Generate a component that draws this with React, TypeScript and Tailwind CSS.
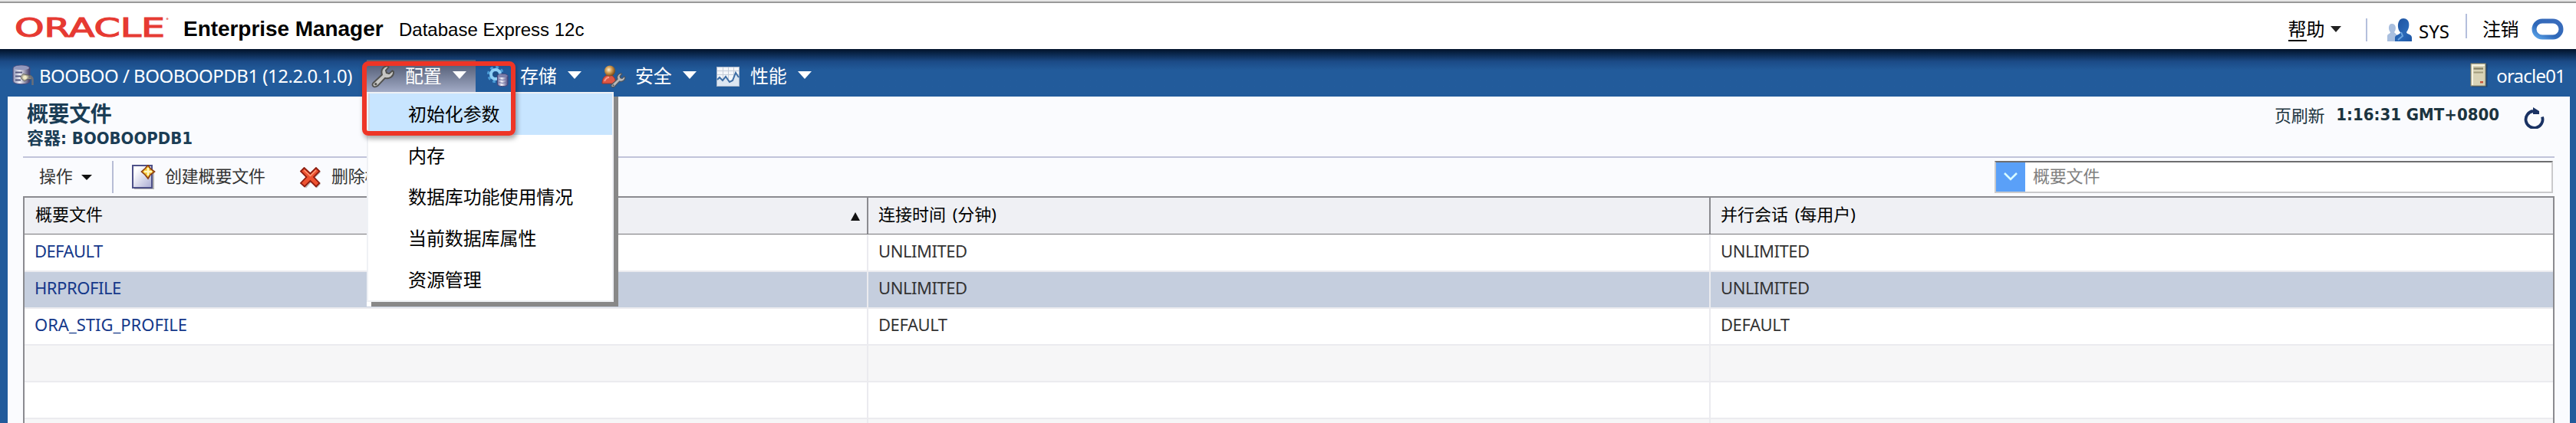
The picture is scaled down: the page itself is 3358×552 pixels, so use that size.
import React from "react";

const OracleLogo = () => (
  <svg className="h-[36px] w-[204px] overflow-visible" viewBox="0 0 204 36">
    <text x="-1" y="29.500" fontFamily="DejaVu Sans, sans-serif" fontSize="34" fill="#e63a32" stroke="#e63a32" strokeWidth="1.200" textLength="196" lengthAdjust="spacingAndGlyphs">
      ORACLE
    </text>
    <circle cx="198" cy="6.500" r="1.500" fill="#ee8a84" />
  </svg>
);

const Triangle = ({ className }: { className: string }) => (
  <svg className={className} viewBox="0 0 18 10" preserveAspectRatio="none">
    <path d="M0 0H18L9 10Z" fill="currentColor" />
  </svg>
);

const DatabaseIcon = () => (
  <svg className="h-7 w-7" viewBox="0 0 28 28">
    <defs>
      <linearGradient id="db" x1="0" x2="1">
        <stop offset="0" stopColor="#8d93b5" />
        <stop offset=".4" stopColor="#f4f4fa" />
        <stop offset="1" stopColor="#3d3a66" />
      </linearGradient>
    </defs>
    <path d="M1 5C1 0 23 0 23 5V22C23 27 1 27 1 22Z" fill="url(#db)" stroke="#4a4a7c" />
    <ellipse cx="12" cy="4.500" rx="10" ry="3" fill="#9298bd" />
    <path d="M4 10.500H13M4 15.500H11M4 20.500H11" stroke="#55587e" strokeWidth="2" />
    <path d="M11 16L14 12.500L20 14L25 15V19H20L16 22L12 19Z" fill="#b9b5a0" stroke="#66655c" />
    <circle cx="16.500" cy="17" r="2.500" fill="#f3edc8" />
    <path d="M21 16.500H24Q26.500 16.500 26.500 20V27" stroke="#6b6f7a" strokeWidth="2.500" fill="none" />
  </svg>
);

const Wrench = ({ light = "#c6c6c4", dark = "#51514f" }: { light?: string; dark?: string }) => (
  <g strokeLinejoin="round">
    <path
      d="M2 24L14 13C12 7 15 2 21 1L23 2.500L19 7L20 10.500L23.500 11.500L28 7.500L29.500 9C30 15 24 19 18 17.500L8 28C4 31 -1 28 2 24Z"
      fill={light}
      stroke={dark}
      strokeWidth="2"
    />
    <circle cx="5.500" cy="25.500" r="1.700" fill={dark} />
  </g>
);

const WrenchIcon = () => (
  <svg className="h-[30px] w-[31px]" viewBox="0 0 31 31">
    <Wrench />
  </svg>
);

const StorageIcon = () => (
  <svg className="h-[28px] w-[30px]" viewBox="0 0 30 28">
    <defs>
      <linearGradient id="cyl" x1="0" x2="1">
        <stop offset="0" stopColor="#6a6a9c" />
        <stop offset=".4" stopColor="#f2f2fb" />
        <stop offset="1" stopColor="#4b4a80" />
      </linearGradient>
    </defs>
    <circle cx="12" cy="11" r="9" fill="none" stroke="#4a9bd6" strokeWidth="4" strokeDasharray="3.500 3.570" />
    <circle cx="12" cy="11" r="6" fill="none" stroke="#8fd0f5" strokeWidth="4" />
    <circle cx="12" cy="11" r="3.500" fill="#1d4f86" />
    <path d="M14.500 13C14.500 9.500 28 9.500 28 13V24C28 27.500 14.500 27.500 14.500 24Z" fill="url(#cyl)" stroke="#45457a" />
    <ellipse cx="21.250" cy="13" rx="6.500" ry="2" fill="#7c7fab" />
    <path d="M16 17.500Q21 19.500 26.500 17.500M16 21.500Q21 23.500 26.500 21.500" stroke="#7173a3" fill="none" />
  </svg>
);

const SecurityIcon = () => (
  <svg className="h-[31px] w-[32px]" viewBox="0 0 32 31">
    <defs>
      <radialGradient id="head" cx=".4" cy=".4" r=".6">
        <stop offset="0" stopColor="#fff0cc" />
        <stop offset=".5" stopColor="#cf9a50" />
        <stop offset="1" stopColor="#7a4c1a" />
      </radialGradient>
    </defs>
    <path d="M1 24C1 17 4 13 10 13C15 13 18 16 19 24Z" fill="#dd5645" stroke="#a03427" />
    <path d="M4 21Q6 16 10 16" stroke="#f59c8e" strokeWidth="2" fill="none" />
    <circle cx="11" cy="7.500" r="7" fill="url(#head)" />
    <g transform="translate(12 10) scale(.64)">
      <Wrench light="#b9b9b9" dark="#4c5460" />
    </g>
  </svg>
);

const PerformanceIcon = () => (
  <svg className="h-[26px] w-[30px]" viewBox="0 0 30 26">
    <rect x=".500" y=".500" width="29" height="25" fill="#f3f6fa" stroke="#a9b6c9" />
    <path d="M1 5.500H29M1 10.500H29M8.500 1V16M15.500 1V16M22.500 1V16" stroke="#c5ccd8" />
    <path d="M1 17L4 14L8 18L12 13L17 20L21 18L25 8L29 14V25H1Z" fill="#dbe6f2" />
    <path d="M1 17L4 14L8 18L12 13L17 20L21 18L25 8L29 14" stroke="#3f6ea5" strokeWidth="2" fill="none" />
  </svg>
);

const UsersIcon = () => (
  <svg className="h-[30px] w-8" viewBox="0 0 32 30">
    <defs>
      <linearGradient id="usr" x1="0" x2="1" y1="0" y2="1">
        <stop offset="0" stopColor="#1c4f9c" />
        <stop offset=".6" stopColor="#2a69b8" />
        <stop offset="1" stopColor="#1d56a4" />
      </linearGradient>
    </defs>
    <path d="M0 30V23C0 20 4 20 4 18C1 15 1 7 6 7C12 7 12 15 9 18L12 21V30Z" fill="#a9bfdf" />
    <path d="M10 30V25C10 21 18 21 17 18C12 13 13 0 21 0C30 0 30 12 25 18C25 21 32 20 32 25V30Z" fill="url(#usr)" />
    <path d="M18 18L20 23L14 28" stroke="#6aa5e0" strokeWidth="2" fill="none" />
  </svg>
);

const ServerIcon = () => (
  <svg className="h-[32px] w-[24px]" viewBox="0 0 24 32">
    <rect x="2.500" y="1.500" width="20" height="30" fill="#1b2c45" opacity=".5" />
    <rect x="1" y="1" width="19" height="29" fill="#d8d3b6" stroke="#8d8768" />
    <path d="M2 2H19V4H4V29H2Z" fill="#f6f3e2" />
    <path d="M4.500 7.500H17" stroke="#8b866a" strokeWidth="2.500" />
    <path d="M4.500 12.500H17" stroke="#a29c7c" strokeWidth="2" />
    <rect x="13" y="24" width="4" height="2.500" fill="#c8553a" />
  </svg>
);

const NewIcon = () => (
  <svg className="h-8 w-8" viewBox="0 0 32 32">
    <defs>
      <linearGradient id="page" x1="0" x2="1" y1="0" y2="1">
        <stop offset=".2" stopColor="#ffffff" />
        <stop offset="1" stopColor="#a9abd2" />
      </linearGradient>
    </defs>
    <path d="M3 31.500H28V8" stroke="#b5b5b5" strokeWidth="2" fill="none" />
    <rect x="1" y="1" width="25" height="29" fill="url(#page)" stroke="#4e5189" strokeWidth="2" />
    <path d="M21 .500L24 5L29.500 9L24 13L21 18L17 13L12.500 9L17 5Z" fill="#f6c431" stroke="#8a3c12" strokeWidth="1.600" />
    <path d="M21 4V14M16 9H26" stroke="#fff7c0" strokeWidth="2.500" />
  </svg>
);

const DeleteIcon = () => (
  <svg className="h-7 w-7" viewBox="0 0 28 28">
    <path d="M7 3L14.500 10L22 3L27 7L19 14.500L27 22L22 27.500L14.500 20L8 27.500L3 22L10 14.500L3 7Z" fill="#bdbdbd" />
    <path d="M5.500 1L13.500 8.500L21 1L25.500 5.500L18 13L25.500 21L21 25.500L13.500 18L6 25.500L1 21L8.500 13L1 5.500Z" fill="#ee5230" stroke="#8e1d10" strokeWidth="1.800" />
    <path d="M5.500 4L13.500 11.500L21 4" stroke="#ff9c76" strokeWidth="1.500" fill="none" />
  </svg>
);

const RefreshIcon = () => (
  <svg className="h-7 w-7" viewBox="0 0 28 28">
    <path d="M24 12.500A11 11 0 1 1 12 5" stroke="#1a3263" strokeWidth="3.800" fill="none" />
    <path d="M12 0L20 5L20 9H12Z" fill="#1a3263" />
  </svg>
);

const navItems = [
  { label: "配置", icon: <WrenchIcon />, active: true },
  { label: "存储", icon: <StorageIcon />, active: false },
  { label: "安全", icon: <SecurityIcon />, active: false },
  { label: "性能", icon: <PerformanceIcon />, active: false },
];

const menuItems = ["初始化参数", "内存", "数据库功能使用情况", "当前数据库属性", "资源管理"];

const rows = [
  { cells: ["DEFAULT", "UNLIMITED", "UNLIMITED"], bg: "bg-white", tracking: "tracking-[-0.6px]" },
  { cells: ["HRPROFILE", "UNLIMITED", "UNLIMITED"], bg: "bg-[#c5cede]", tracking: "tracking-[-0.45px]" },
  { cells: ["ORA_STIG_PROFILE", "DEFAULT", "DEFAULT"], bg: "bg-white", tracking: "tracking-[0px]" },
  { cells: ["", "", ""], bg: "bg-[#f6f6f7]", tracking: "" },
  { cells: ["", "", ""], bg: "bg-white", tracking: "" },
  { cells: ["", "", ""], bg: "bg-[#f6f6f7]", tracking: "" },
];

const ConfigMenu = () => (
  <div className="absolute left-0 top-[42px] z-10 h-[280px] w-[328px] text-black">
    <div className="absolute bottom-0 left-0 h-[6px] w-[6px] bg-white" />
    <div className="absolute bottom-0 right-0 h-[274px] w-[322px] bg-[#888888]" />
    <ul className="relative h-[274px] w-[322px] border-2 border-[#eff1f5] bg-white">
      {menuItems.map((item, i) => (
        <li
          key={item}
          className={`flex h-[54px] items-center text-[24px] leading-[30px] tracking-[-0.1px] ${
            i === 0 ? "border-l-2 border-[#d3dae2] bg-[#c8e5ff] pl-[50px]" : "pl-[52px]"
          }`}
        >
          {item}
        </li>
      ))}
    </ul>
    <div className="absolute left-[-6px] top-[-40px] h-[97px] w-[200px] rounded-[8px] border-[6px] border-[#ee3526] shadow-[2px_4px_6px_rgba(0,0,0,0.35)]" />
  </div>
);

export default function App() {
  return (
    <div className="flex h-[552px] w-[3358px] flex-col overflow-hidden bg-[#225b9b] font-['Noto_Sans','Noto_Sans_CJK_SC',sans-serif] whitespace-nowrap">
      <div className="h-1 shrink-0 border-b-2 border-[#999999] bg-[#e6e6e6]" />

      <header className="flex h-[60px] shrink-0 bg-white text-black">
        <div className="ml-[20px] mt-[14px]">
          <OracleLogo />
        </div>
        <h1 className="ml-[15px] mt-[18px] w-[281px] font-['Liberation_Sans',sans-serif] text-[28px] leading-[32px] font-bold tracking-[-0.05px]">
          Enterprise Manager
        </h1>
        <span className="mt-[21px] font-['Liberation_Sans',sans-serif] text-[24px] leading-[28px]">
          Database Express 12c
        </span>
        <div className="ml-auto flex">
          <div className="mt-[18px] flex text-[24px] leading-[32px] tracking-[-0.5px]">
            <span className="h-[32px] w-[24px] border-b-2 border-black">帮</span>
            <span>助</span>
          </div>
          <Triangle className="ml-[8px] mt-[30px] h-[8px] w-[14px] text-[#222]" />
          <div className="ml-[32px] mt-[20px] h-[30px] w-[2px] bg-[#b4bfdc]" />
          <div className="ml-[26px] mt-[20px]">
            <UsersIcon />
          </div>
          <span className="ml-[9px] mt-[22px] w-[61px] text-[24px] leading-[30px]">SYS</span>
          <div className="mt-[14px] h-[32px] w-[2px] bg-[#b4bfdc]" />
          <span className="ml-[20px] mt-[19px] text-[24px] leading-[30px] tracking-[-0.5px]">注销</span>
          <svg className="ml-[17px] mr-[16px] mt-[20px] h-[28px] w-[42px]" viewBox="0 0 42 28">
            <defs>
              <linearGradient id="ring" x1="0" x2="1" y1="1" y2="0">
                <stop offset="0" stopColor="#5aa4ea" />
                <stop offset=".4" stopColor="#2f68b8" />
                <stop offset="1" stopColor="#3a6cbc" />
              </linearGradient>
            </defs>
            <rect x="3.500" y="3.500" width="35" height="21" rx="10.500" fill="none" stroke="url(#ring)" strokeWidth="6" />
          </svg>
        </div>
      </header>

      <nav className="flex h-[62px] shrink-0 bg-linear-to-b from-[#03132b] via-[#1b4a86] via-[26%] to-[#225b9b] to-[45%] text-[24px] leading-[32px] text-white">
        <div className="ml-[16px] mt-[20px]">
          <DatabaseIcon />
        </div>
        <span className="ml-[7px] mt-[19px] w-[427px] tracking-[-0.5px]">BOOBOO / BOOBOOPDB1 (12.2.0.1.0)</span>
        {navItems.map((item) => (
          <div key={item.label} className="relative mt-[14px] h-[42px] w-[150px]">
            <div
              className={`flex h-[42px] w-[142px] items-center pl-[6px] ${
                item.active ? "border-t-2 border-[#596172] bg-linear-to-b from-[#4e5870] to-[#a2abc6]" : "pt-[2px]"
              }`}
            >
              <div className="w-[44px]">{item.icon}</div>
              <span className="-mt-[3px] w-[62px] tracking-[-0.2px]">{item.label}</span>
              <Triangle className="-mt-[4px] h-[10px] w-[18px] text-white" />
            </div>
            {item.active && <ConfigMenu />}
          </div>
        ))}
        <div className="ml-auto mt-[18px]">
          <ServerIcon />
        </div>
        <span className="ml-[10px] mr-[14px] mt-[19px] tracking-[-0.8px]">oracle01</span>
      </nav>

      <main className="ml-[10px] mr-[8px] flex grow flex-col bg-[#fafbfe] pl-[20px] pr-[20px]">
        <div className="flex h-[80px] shrink-0 border-b-2 border-[#c1c4da] text-[#1b3d55]">
          <div className="ml-[5px] mt-[4px] font-bold">
            <h2 className="text-[28px] leading-[36px] tracking-[-0.4px]">概要文件</h2>
            <div className="font-['DejaVu_Sans_Condensed','Noto_Sans_CJK_SC',sans-serif] text-[22px] leading-[30px]">容器: BOOBOOPDB1</div>
          </div>
          <div className="ml-auto mt-[9px] flex text-[22px] leading-[30px] text-[#1c343f]">
            <span className="tracking-[-0.2px]">页刷新</span>
            <b className="ml-[15px] font-['DejaVu_Sans_Condensed',sans-serif]">1:16:31 GMT+0800</b>
            <div className="ml-[32px] mr-[12px] mt-[5px]">
              <RefreshIcon />
            </div>
          </div>
        </div>

        <div className="flex h-[50px] shrink-0 pt-[4px] text-[22px] leading-[38px] tracking-[-0.2px] text-[#333]">
          <span className="ml-[21px] w-[55px]">操作</span>
          <Triangle className="mt-[18px] h-[7px] w-[14px] text-[#111]" />
          <div className="ml-[26px] mr-[24px] h-[42px] w-[2px] bg-[#b7bdd6]" />
          <div className="mt-[5px]">
            <NewIcon />
          </div>
          <span className="ml-[11px] w-[176px]">创建概要文件</span>
          <div className="mt-[8px]">
            <DeleteIcon />
          </div>
          <span className="ml-[13px]">删除概要文件</span>
          <div className="ml-auto mr-[2px] flex h-[42px] w-[728px] border-2 border-[#cacacc] border-t-[#6e6e70] bg-white text-[#808080]">
            <div className="flex w-[38px] items-center justify-center bg-[#5aa0f8]">
              <svg className="h-[12px] w-[18px]" viewBox="0 0 18 12">
                <path d="M1 1L9 9L17 1" stroke="#d8fbff" strokeWidth="2.500" fill="none" />
              </svg>
            </div>
            <span className="ml-[10px] leading-[35px]">概要文件</span>
          </div>
        </div>

        <div className="grow overflow-hidden border-x-2 border-t-2 border-[#8b8b90]">
          <div className="flex h-[48px] border-b border-[#77777a] bg-[#eff0f4] text-[22px] leading-[43px] [word-spacing:3px] text-black">
            <div className="flex w-[1100px] justify-between border-r-2 border-[#8b8b90] pl-[14px] pr-[9px]">
              <span>概要文件</span>
              <svg className="mt-[19px] h-[11px] w-[12px]" viewBox="0 0 12 11">
                <path d="M6 0L12 11H0Z" fill="#111" />
              </svg>
            </div>
            <div className="w-[1098px] border-r-2 border-[#8b8b90] pl-[13px]">连接时间 (分钟)</div>
            <div className="pl-[13px]">并行会话 (每用户)</div>
          </div>
          {rows.map((row, i) => (
            <div
              key={i}
              className={`flex border-b-2 border-[#ebebef] text-[22px] tracking-[-0.45px] text-[#333] ${row.bg} ${
                i === 0 ? "h-[49px] leading-[43px]" : "h-[48px] leading-[41px]"
              }`}
            >
              <div className={`w-[1100px] border-r-2 border-[#ebebef] pl-[13px] text-[#14388a] ${row.tracking}`}>{row.cells[0]}</div>
              <div className="w-[1098px] border-r-2 border-[#ebebef] pl-[13px]">{row.cells[1]}</div>
              <div className="pl-[13px]">{row.cells[2]}</div>
            </div>
          ))}
        </div>
      </main>
    </div>
  );
}
